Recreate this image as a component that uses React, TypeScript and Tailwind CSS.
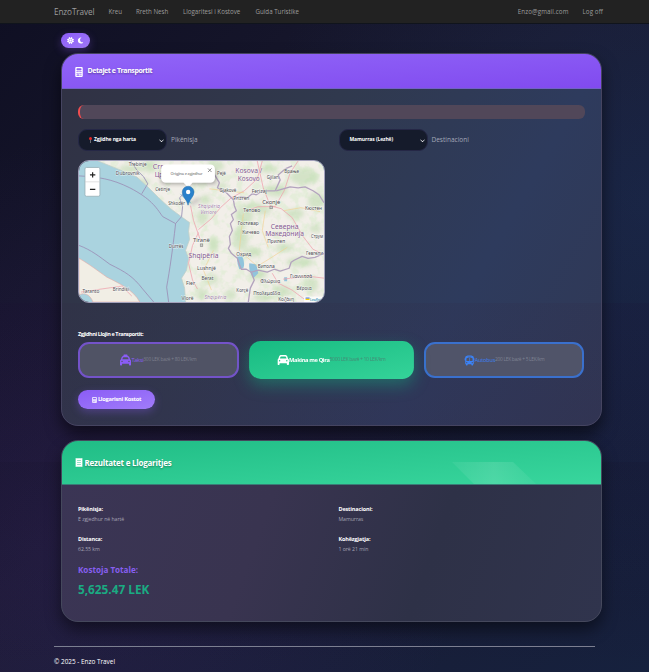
import React from "react";
import { FaCalculator, FaCar, FaTaxi, FaBus, FaMoon, FaSun, FaReceipt, FaChevronDown } from "react-icons/fa6";

type Label = [string, number, number, number];

const towns: Label[] = [
  ["Dubrovnik", 115, 174, 24],
  ["Trebinje", 128, 165, 18],
  ["Cetinje", 154.5, 190.5, 15],
  ["Shkodër", 167.5, 204.5, 17],
  ["Durrës", 168, 248, 15],
  ["Taranto", 81.5, 292.5, 17],
  ["Brindisi", 112, 290.5, 16],
  ["Fier", 185.5, 285, 9],
  ["Vlorë", 181, 300, 12],
  ["Lushnjë", 196.5, 270, 19],
  ["Berat", 201, 279.5, 12],
  ["Pejë", 216.5, 174.5, 9],
  ["Gjakovë", 219, 191, 17],
  ["Gjilan", 266.5, 178, 12],
  ["Ferizaj", 251.5, 191.8, 15],
  ["Prizren", 233, 199.7, 16],
  ["Врање", 284, 172.5, 15],
  ["Тетово", 243, 211.5, 17],
  ["Гостивар", 237.5, 224.5, 21],
  ["Кичево", 242, 233.5, 17],
  ["Прилеп", 267, 243, 18],
  ["Охрид", 236, 256, 15],
  ["Битола", 257.5, 267.5, 17],
  ["Кюстен", 305, 209.5, 17],
  ["Струм", 311, 237.5, 12],
  ["Гевгели", 306, 254.5, 17],
  ["Φλώρινα", 260, 283, 20],
  ["Γιαννιτσά", 290, 278, 22],
  ["Βέροια", 296.5, 290, 15],
  ["Korçë", 236, 292, 12],
  ["Πτολεμαΐδα", 253, 294.5, 27],
  ["Κοζάνη", 278, 301, 16],
];

const regions: Label[] = [
  ["Crna", 152, 168.5, 16],
  ["Црна", 154, 176.5, 16],
  ["Kosova /", 235, 172, 27],
  ["Kosovo", 237.5, 180, 22],
  ["Shqipëria", 188, 257.5, 30],
  ["Северна", 270.5, 228, 28],
  ["Македонија", 265, 235.5, 39],
];

const woods = [
  [130, 168, 12, 4], [148, 165, 9, 5], [143, 181, 7, 3], [215, 165, 9, 5], [222, 185, 5, 3],
  [244, 215, 9, 10], [240, 238, 8, 12], [252, 252, 9, 5], [263, 210, 8, 4], [276, 190, 12, 6],
  [304, 176, 14, 8], [316, 200, 8, 9], [295, 213, 9, 5], [254, 205, 9, 3], [300, 262, 14, 5],
  [258, 274, 9, 5], [282, 291, 9, 6], [263, 297, 10, 5], [311, 285, 7, 8], [213, 244, 5, 7],
  [211, 279, 7, 5], [202, 216, 6, 7], [230, 295, 6, 5], [284, 247, 9, 4], [268, 168, 9, 4],
  [201, 294, 5, 6], [205, 199, 5, 5], [315, 228, 6, 4],
];

function MapView() {
  return (
    <svg viewBox="78 160 246 142" preserveAspectRatio="none" className="block h-full w-full" fontFamily="Noto Sans, sans-serif">
      <defs>
        <filter id="soft" x="-50%" y="-50%" width="200%" height="200%">
          <feGaussianBlur stdDeviation="2" />
        </filter>
        <filter id="relief" x="0" y="0" width="100%" height="100%">
          <feTurbulence type="fractalNoise" baseFrequency="0.11" numOctaves="3" seed="8" />
          <feColorMatrix values="0 0 0 0 0.68  0 0 0 0 0.84  0 0 0 0 0.6  0 5 0 0 -2.4" />
        </filter>
        <clipPath id="land">
          <path d="M97 160 L117 168 136 176 147 186 158 197 170 208 182 217 189 222 188 231 189 239 185 250 188 258 186 270 181 278 184 288 185 302 H324 V160Z" />
        </clipPath>
      </defs>
      <rect x="78" y="160" width="246" height="142" fill="#aad3df" />
      <g clipPath="url(#land)">
        <rect x="78" y="160" width="246" height="142" fill="#f2efe9" />
        <rect x="78" y="160" width="246" height="142" filter="url(#relief)" opacity="0.5" />
        <g fill="#b5d8a6" opacity="0.5" filter="url(#soft)">
          {woods.map(([x, y, rx, ry]) => (
            <ellipse key={`${x}-${y}`} cx={x} cy={y} rx={rx} ry={ry} />
          ))}
        </g>
      </g>
      <path d="M97 160 L117 168 136 176 147 186 158 197 170 208 182 217 189 222 188 231 189 239 185 250 188 258 186 270 181 278 184 288 185 302" fill="none" stroke="#c0cfc9" strokeWidth="0.8" />
      <path d="M78 258 C90 265 96 270 106 277 C118 283 133 290 139 302 H92 C89 294 83 292 78 295Z" fill="#f1eee5" stroke="#e5aaa5" strokeWidth="0.6" />
      <path d="M179 193 L187 196 191 203 186 200Z M237 256 h5 q3 7 1 12 l-4 1 q-3-7-2-13Z M249 263 l7 1 2 9 -5 5 q-5-7-4-15Z M284 277 h3 v4 h-3Z" fill="#91c4dc" />
      <g fill="none" stroke="#efa5b0" strokeWidth="0.8">
        <path d="M198 229 L211 218 220 207 231 197 244 190 257 178 262 160" />
        <path d="M257 160 L263 187 270 205 281 208 292 217 303 236 313 249 324 254" />
        <path d="M246 210 L258 206 275 206 284 190 290 172 298 160" />
        <path d="M198 232 L192 245 188 263 192 280 197 289" />
        <path d="M80 292 L100 289 121 286 M121 286 L131 296" />
        <path d="M272 273 L278 283 292 290 304 299 M283 279 L308 276 324 278" />
        <path d="M190 205 L193 220 200 240" />
      </g>
      <g fill="none" stroke="#f3cf8d" strokeWidth="0.6">
        <path d="M209 188 L225 190 244 192 M243 213 L241 230 239 250 257 266 270 258 287 247 M265 210 L262 230 268 247" />
        <path d="M213 250 L203 270 211 290 M284 210 L301 207 320 211" />
      </g>
      <g fill="none" stroke="#9c93b8" strokeWidth="0.9" strokeLinejoin="round">
        <path d="M78 175 C97 176 111 178 129 187 C150 198 155 206 162 216 L175 223 181 216 182 206 179 197 187 189" />
        <path d="M141 193 L147 183 143 176 136 169 130 160" />
        <path d="M175 223 C172 250 169 270 166 287 L168 302" />
        <path d="M78 245 C91 250 98 256 109 264 C125 272 132 276 142 289 L153 302" />
      </g>
      <g fill="none" stroke="#b3a3be" strokeWidth="1.300" strokeLinejoin="round">
        <path d="M213 172 L219 182 217 187 226 192 233 199 240 196 247 197 252 193 256 194 263 190 275 190 280 179 278 174 285 168 292 165" />
        <path d="M233 199 L234 205 236 210 231 214 233 219 230 223 232 230 229 236 230 244 228 248 231 253 237 258 239 264 241 269 246 269 251 272 258 270 267 272 274 269 280 271 289 268 291 262 294 260 302 256 308 258 315 257 324 253" />
        <path d="M276 190 L283 188 290 186 298 187 305 186 313 190 319 194 324 202" />
        <path d="M251 272 L254 280 250 288 248 302" />
      </g>
      <g fontSize="4.900" fill="#4c4c50" stroke="#fff" strokeOpacity="0.7" strokeWidth="0.8" paintOrder="stroke">
        {towns.map(([name, x, y, w]) => (
          <text key={name} x={x} y={y} textLength={w} lengthAdjust="spacingAndGlyphs">{name}</text>
        ))}
        <text x="192.500" y="242" fontSize="6" textLength="17">Tiranë</text>
        <text x="262" y="203.500" fontSize="6" textLength="18">Скопје</text>
      </g>
      <g fontSize="6.300" fill="#83588f" stroke="#fff" strokeOpacity="0.6" strokeWidth="0.7" paintOrder="stroke">
        {regions.map(([name, x, y, w]) => (
          <text key={name} x={x} y={y} textLength={w} lengthAdjust="spacingAndGlyphs">{name}</text>
        ))}
        <g fontSize="5" fontStyle="italic" fill="#a27eab">
          <text x="197.500" y="207.500" textLength="22">Shqipëria</text>
          <text x="200" y="213.500" textLength="16">Veriore</text>
          <text x="204" y="298.500" textLength="22">Shqipëria</text>
        </g>
      </g>
      <rect x="199.700" y="243.500" width="2.600" height="2.600" fill="#ccc" stroke="#777" strokeWidth="0.5" />
      <rect x="269.700" y="205.500" width="2.600" height="2.600" fill="#ccc" stroke="#777" strokeWidth="0.5" />

      <path d="M161 169 h54 v14 h-54Z" fill="#000" opacity="0.35" filter="url(#soft)" />
      <path d="M165 163.500 H210 a4.500 4.500 0 0 1 4.500 4.500 V177.500 a4.500 4.500 0 0 1 -4.500 4.500 H192 L187.500 186.500 183 182 H165 a4.500 4.500 0 0 1 -4.500 -4.500 V168 a4.500 4.500 0 0 1 4.500 -4.500Z" fill="#fff" />
      <text x="170" y="174" fontSize="3.900" fill="#666" textLength="32">Origjina e zgjedhur</text>
      <path d="M207.500 167.500 l3.600 3.600 m0 -3.600 l-3.600 3.600" stroke="#757575" strokeWidth="0.8" />
      <path d="M188 204 L197 197 200 199 192 204Z" fill="#000" opacity="0.25" filter="url(#soft)" />
      <path d="M187.500 204.500 C186.500 199 181.700 196 181.700 191.300 a5.900 5.900 0 0 1 11.800 0 C193.500 196 188.500 199 187.500 204.500Z" fill="#2a81cb" stroke="#226da9" strokeWidth="0.5" />
      <circle cx="187.600" cy="191.200" r="2.200" fill="#fff" />

      <rect x="84" y="166.500" width="15" height="29" rx="1.500" fill="#fff" stroke="#98aeb6" strokeWidth="0.8" />
      <path d="M84 181 h15" stroke="#ccc" strokeWidth="0.6" />
      <path d="M89 174 h5.400 M91.700 171.300 v5.400 M89 188.500 h5.400" stroke="#222" strokeWidth="1.200" />
      <rect x="304" y="296.500" width="20" height="6" fill="#fff" opacity="0.75" />
      <path d="M305.500 297.500 h4 v1.300 h-4Z" fill="#4c7be1" />
      <path d="M305.500 298.800 h4 v1.300 h-4Z" fill="#ffd500" />
      <text x="310" y="300.600" fontSize="3.600" fill="#0078a8" textLength="11">Leaflet</text>
    </svg>
  );
}

function PlaceSelect({ value, label, pin }: { value: string; label: string; pin?: boolean }) {
  return (
    <div className="flex items-center">
      <div className="flex h-[22px] w-[89px] items-center rounded-[9px] border border-[#252746] bg-[#151b2b] pl-[10px] pr-[2px] text-[5px] font-bold tracking-[-0.1px] text-white">
        {pin && (
          <svg viewBox="0 0 4 8" className="mr-[2px] h-[6px] w-[3px]">
            <path d="M1.600 3h.8v5h-.8z" fill="#aaa" />
            <circle cx="2" cy="2" r="2" fill="#e52b2b" />
          </svg>
        )}
        <span className="whitespace-nowrap">{value}</span>
        <FaChevronDown className="ml-auto h-[5px] w-[5px]" />
      </div>
      <span className="ml-1 text-[6.500px] text-[#a4a8b7]">{label}</span>
    </div>
  );
}

function Fact({ title, value }: { title: string; value: string }) {
  return (
    <div className="h-[29.500px]">
      <div className="text-[5.500px] font-bold leading-[10px] tracking-[-0.15px] text-white">{title}</div>
      <div className="text-[5.200px] leading-[10px] tracking-[-0.05px] text-[#a5a4b4]">{value}</div>
    </div>
  );
}

export default function App() {
  return (
    <div className="flex h-[672px] w-full flex-col overflow-hidden bg-[linear-gradient(180deg,transparent_303px,#1a0c3020_303px,#1a0c3020_462px,#150c2838_462px,transparent_672px),radial-gradient(circle_at_10%_80%,#56309a2e,transparent_50%),radial-gradient(circle_at_100%_30%,#1c458038,transparent_50%),linear-gradient(135deg,#0f0f23_0%,#1a1a30_45%,#16213e_100%)] font-['Open_Sans','Noto_Sans',sans-serif]">
      <nav className="flex h-6 shrink-0 items-center border-b border-[#10141c] bg-[#222] pl-[54px] pr-[46px] pt-px text-[6.200px] text-[#9d9d9d]">
        <span className="w-[54.500px] text-[8.200px] tracking-[-0.1px]">EnzoTravel</span>
        <span className="w-[27.500px]">Kreu</span>
        <span className="w-[47px]">Rreth Nesh</span>
        <span className="w-[72.500px] whitespace-nowrap">Llogaritesi i Kostove</span>
        <span>Guida Turistike</span>
        <span className="ml-auto tracking-[0.12px]">Enzo@gmail.com</span>
        <span className="ml-[14px] tracking-[0.1px]">Log off</span>
      </nav>

      <main className="ml-[61px] w-[540.500px] shrink-0 pt-[9px]">
        <button className="flex h-[15px] w-[29px] items-center justify-center gap-[3px] rounded-full bg-gradient-to-br from-[#8b5cf6] to-[#a078fa] text-white shadow-[0_3px_8px_#8b5cf650]">
          <FaSun size={7} />
          <FaMoon size={7} />
        </button>

        <section className="mt-[5px] h-[373px] overflow-hidden rounded-[17px] border border-[#454460] bg-[linear-gradient(180deg,transparent_249px,#30244020_249px,#35264a38_100%),linear-gradient(120deg,#303143_0%,#30394e_40%,#2e3b5d_72%,#303855_100%)] shadow-[0_8px_16px_#0008]">
          <header className="flex h-[35px] items-center border-b border-[#7360c8] bg-gradient-to-br from-[#9165f8] to-[#814aef] pl-[13px] pt-px text-[7px] font-bold tracking-[-0.42px] text-white [text-shadow:0_1px_2px_#0005]">
            <FaCalculator className="mr-[4.500px] h-[10px] w-[8px]" />
            Detajet e Transportit
          </header>
          <div className="px-4 pt-4">
            <div className="h-[14px] rounded-[6px] border-l-2 border-[#ef4d50] bg-[#514759]" />
            <div className="mt-[10px] grid grid-cols-[260.500px_1fr]">
              <PlaceSelect value="Zgjidhe nga harta" label="Pikënisja" pin />
              <PlaceSelect value="Mamurras (Lezhë)" label="Destinacioni" />
            </div>
            <div className="mt-[9px] h-[143px] w-[247px] overflow-hidden rounded-[11px] border border-[#a3a1bb]">
              <MapView />
            </div>
            <div className="mt-[25px] h-[12px] text-[5.500px] font-bold leading-[12px] tracking-[-0.41px] text-white">Zgjidhni Llojin e Transportit:</div>
            <div className="mt-[2px] flex gap-[14px]">
              <div className="flex h-[36px] flex-1 items-center justify-center whitespace-nowrap rounded-[11px] border-2 border-[#7453c9] bg-[#505365] text-[4.800px] tracking-[-0.210px] text-[#7e808e]">
                <FaTaxi className="h-[12px] w-[11px] shrink-0 text-[#8b5cf6]" />
                <span className="text-[5.500px] text-[#8b5cf6]">Taksi</span>
                <span>300 LEK bazë + 80 LEK/km</span>
              </div>
              <div className="flex h-[36px] flex-1 scale-105 items-center justify-center whitespace-nowrap rounded-[11px] bg-gradient-to-br from-[#16bb82] to-[#34d399] text-[4.800px] tracking-[-0.310px] text-[#438b76] shadow-[0_6px_15px_#10b98166]">
                <FaCar className="h-[12px] w-[11px] shrink-0 text-white" />
                <span className="text-[5.500px] font-bold tracking-[-0.38px] text-white">Makina me Qira</span>
                <span>5000 LEK bazë + 10 LEK/km</span>
              </div>
              <div className="flex h-[36px] flex-1 items-center justify-center whitespace-nowrap rounded-[11px] border-2 border-[#3a70cd] bg-[#505469] text-[4.800px] tracking-[-0.270px] text-[#7f8393]">
                <FaBus className="h-[11px] w-[11px] shrink-0 text-[#3b82f6]" />
                <span className="text-[5.500px] tracking-[-0.17px] text-[#3b82f6]">Autobus</span>
                <span>200 LEK bazë + 5 LEK/km</span>
              </div>
            </div>
            <button className="mt-3 flex h-[19px] w-[77px] items-center justify-center gap-[1px] rounded-full bg-gradient-to-br from-[#8b5cf6] to-[#a17cfa] text-[5.700px] font-bold tracking-[-0.27px] text-white shadow-[0_3px_9px_#8b5cf655]">
              <FaCalculator className="h-[6px] w-[5px]" />
              Llogarisni Kostot
            </button>
          </div>
        </section>

        <section className="mt-[14px] h-[182px] overflow-hidden rounded-[17px] border border-[#45485c] bg-[linear-gradient(110deg,#3b3555_0%,#393450_38%,#2e3147_68%,#30344d_100%)] shadow-[0_8px_16px_#0007]">
          <header className="relative flex h-[44px] items-center border-b border-[#397e77] bg-gradient-to-br from-[#20bd86] to-[#38d69d] pl-[13px] text-[8px] font-bold tracking-[-0.23px] text-white [text-shadow:0_1px_2px_#0005]">
            <FaReceipt className="mr-[1.500px] h-[9px] w-[8px]" />
            Rezultatet e Llogaritjes
            <svg className="absolute bottom-0 left-[390px] h-[22px] w-[84px]" viewBox="0 0 84 22">
              <defs>
                <linearGradient id="sheen">
                  <stop offset="0" stopColor="#fff" stopOpacity="0.05" />
                  <stop offset="0.5" stopColor="#fff" stopOpacity="0.12" />
                  <stop offset="1" stopColor="#fff" stopOpacity="0.04" />
                </linearGradient>
              </defs>
              <path d="M0 0 H61 L84 22 H22Z" fill="url(#sheen)" />
            </svg>
          </header>
          <div className="px-4 pt-[19px]">
            <div className="grid grid-cols-[260.500px_1fr]">
              <Fact title="Pikënisja:" value="E zgjedhur në hartë" />
              <Fact title="Destinacioni:" value="Mamurras" />
              <Fact title="Distanca:" value="62.55 km" />
              <Fact title="Kohëzgjatja:" value="1 orë 21 min" />
            </div>
            <div className="text-[8.100px] font-bold leading-[14px] text-[#875ff0]">Kostoja Totale:</div>
            <div className="mt-[3px] text-[11.800px] font-bold leading-[18px] text-[#1aab82]">5,625.47 LEK</div>
          </div>
        </section>
      </main>

      <footer className="ml-[54px] mt-[24px] w-[541px] border-t border-[#7c7f91] pt-[9px] text-[6.400px] leading-[12px] text-white">© 2025 - Enzo Travel</footer>
    </div>
  );
}
